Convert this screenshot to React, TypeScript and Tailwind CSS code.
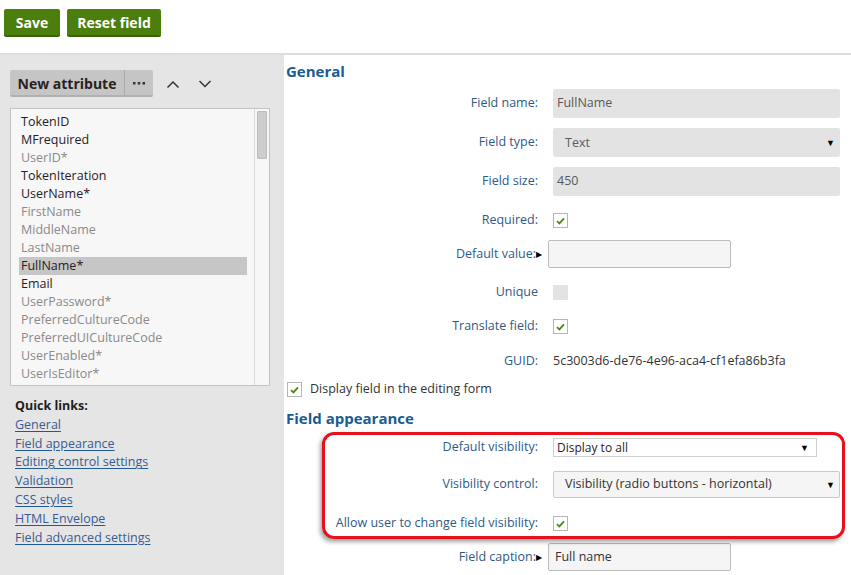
import React from "react";

const F = { fontFamily: '"Open Sans", "Noto Sans", Arial, sans-serif' };

function Check({ checked = true, disabled = false }: { checked?: boolean; disabled?: boolean }) {
  if (disabled) return <div className="w-[15px] h-[15px] bg-[#e3e3e3]" />;
  return (
    <div className="w-[15px] h-[15px] border border-[#b5b5b5] bg-white flex items-center justify-center">
      {checked && (
        <svg width="9" height="8" viewBox="0 0 9 8">
          <path d="M1 4.2 L3.4 6.4 L8 1.4" fill="none" stroke="#4a8a12" strokeWidth="1.8" />
        </svg>
      )}
    </div>
  );
}

function Label({ children, arrow = false, w = 252 }: { children: React.ReactNode; arrow?: boolean; w?: number }) {
  return (
    <div
      className="shrink-0 text-right text-[12.5px] text-[#2e5a86] flex justify-end items-center"
      style={{ width: arrow ? w + 4 : w }}
    >
      <span>{children}</span>
      {arrow && <span className="text-[8px] text-black leading-none">▶</span>}
    </div>
  );
}

const items: [string, boolean][] = [
  ["TokenID", true],
  ["MFrequired", true],
  ["UserID*", false],
  ["TokenIteration", true],
  ["UserName*", true],
  ["FirstName", false],
  ["MiddleName", false],
  ["LastName", false],
  ["FullName*", true],
  ["Email", true],
  ["UserPassword*", false],
  ["PreferredCultureCode", false],
  ["PreferredUICultureCode", false],
  ["UserEnabled*", false],
  ["UserIsEditor*", false],
];

const links = [
  "General",
  "Field appearance",
  "Editing control settings",
  "Validation",
  "CSS styles",
  "HTML Envelope",
  "Field advanced settings",
];

export default function App() {
  return (
    <div className="w-[851px] h-[575px] overflow-hidden bg-white flex flex-col" style={F}>
      {/* top bar */}
      <div className="h-[55px] shrink-0 flex items-start pt-[9px] pl-[4px] gap-[7px] border-b-2 border-[#dcdcdc]">
        <button className="w-[56px] h-[28px] bg-[#4b7e0c] border-b-2 border-[#3b6409] rounded-[2px] text-white font-bold text-[14px]">
          Save
        </button>
        <button className="w-[94px] h-[28px] bg-[#4b7e0c] border-b-2 border-[#3b6409] rounded-[2px] text-white font-bold text-[14px]">
          Reset field
        </button>
      </div>

      <div className="flex flex-1 min-h-0">
        {/* sidebar */}
        <div className="w-[284px] shrink-0 bg-[#e5e5e5] flex flex-col pl-[10px] pt-[15px]">
          <div className="flex items-center h-[27px]">
            <div className="flex h-[27px] rounded-[2px] bg-[#c5c5c5] border-b-2 border-[#b0b0b0]">
              <div className="w-[114px] flex items-center justify-center font-bold text-[14px] text-[#2b2020] pt-[1px]">
                New attribute
              </div>
              <div className="w-[1px] bg-[#a9a9a9]" />
              <div className="w-[28px] flex items-center justify-center pt-[2px]">
                <svg width="12" height="3" viewBox="0 0 12 3">
                  <rect x="0" y="0" width="2.5" height="2.5" fill="#333" />
                  <rect x="4.75" y="0" width="2.5" height="2.5" fill="#333" />
                  <rect x="9.5" y="0" width="2.5" height="2.5" fill="#333" />
                </svg>
              </div>
            </div>
            <svg width="14" height="10" viewBox="0 0 14 10" className="ml-[13px]">
              <path d="M1.5 8.5 L7 3 L12.5 8.5" fill="none" stroke="#333" strokeWidth="1.5" />
            </svg>
            <svg width="14" height="10" viewBox="0 0 14 10" className="ml-[18px]">
              <path d="M1.5 2 L7 7.5 L12.5 2" fill="none" stroke="#333" strokeWidth="1.5" />
            </svg>
          </div>

          <div className="mt-[11px] w-[260px] h-[278px] border border-[#c3c3c3] bg-[#f7f7f7] flex">
            <div className="flex-1 pt-[4px] pl-[8px] pr-[7px]">
              {items.map(([t, dark]) => (
                <div
                  key={t}
                  className={`h-[18px] leading-[18px] text-[12.5px] pl-[2px] ${t === "FullName*" ? "bg-[#c6c6c6]" : ""} ${dark ? "text-[#2a1b1e]" : "text-[#8a8a8a]"}`}
                >
                  {t}
                </div>
              ))}
            </div>
            <div className="w-[15px] border-l border-[#dadada] pt-[2px] flex justify-center">
              <div className="w-[10px] h-[48px] bg-[#cdcdcd] border border-[#bdbdbd] rounded-[1px]" />
            </div>
          </div>

          <div className="mt-[11px] pl-[5px] text-[12.5px] leading-[18.8px]">
            <div className="font-bold text-[#1e1e1e]">Quick links:</div>
            {links.map((l) => (
              <div key={l}>
                <span className="text-[#3a5b92] underline decoration-[#1f5a96] underline-offset-[2px]">{l}</span>
              </div>
            ))}
          </div>
        </div>

        {/* main */}
        <div className="flex-1 flex flex-col pl-[2px] relative">
          <div className="h-[34px] flex items-center text-[15px] font-bold text-[#1a5b93] pb-[2px]">General</div>

          <div className="flex items-center h-[29px]">
            <Label>Field name:</Label>
            <div className="ml-[15px] w-[287px] h-[29px] bg-[#e3e3e3] rounded-[2px] flex items-center pl-[4px] text-[12.5px] text-[#5a5a5a]">
              FullName
            </div>
          </div>
          <div className="flex items-center h-[29px] mt-[10px]">
            <Label>Field type:</Label>
            <div className="ml-[15px] w-[287px] h-[29px] bg-[#e3e3e3] rounded-[2px] flex items-center pl-[12px] pr-[5px] text-[12.5px] text-[#5a5a5a]">
              <span className="flex-1 pt-[2px]">Text</span>
              <span className="text-[9px] text-black">▼</span>
            </div>
          </div>
          <div className="flex items-center h-[29px] mt-[10px]">
            <Label>Field size:</Label>
            <div className="ml-[15px] w-[287px] h-[29px] bg-[#e3e3e3] rounded-[2px] flex items-center pl-[4px] text-[12.5px] text-[#5a5a5a]">
              450
            </div>
          </div>
          <div className="flex items-center h-[29px] mt-[10px]">
            <Label>Required:</Label>
            <div className="ml-[15px]">
              <Check />
            </div>
          </div>
          <div className="flex items-center h-[28px] mt-[5px]">
            <Label arrow>Default value:</Label>
            <div className="ml-[6px] w-[183px] h-[28px] bg-[#f5f5f5] border border-[#bcbcbc] rounded-[2px]" />
          </div>
          <div className="flex items-center h-[29px] mt-[10px]">
            <Label>Unique</Label>
            <div className="ml-[15px]">
              <Check disabled />
            </div>
          </div>
          <div className="flex items-center h-[29px] mt-[5px]">
            <Label>Translate field:</Label>
            <div className="ml-[15px]">
              <Check />
            </div>
          </div>
          <div className="flex items-center h-[29px] mt-[6px]">
            <Label>GUID:</Label>
            <div className="ml-[15px] text-[12.5px] text-[#333]">5c3003d6-de76-4e96-aca4-cf1efa86b3fa</div>
          </div>
          <div className="flex items-center h-[27px] pl-[1px]">
            <Check />
            <span className="ml-[8px] text-[12.5px] text-[#333]">Display field in the editing form</span>
          </div>
          <div className="h-[30px] flex items-center text-[15px] font-bold text-[#1a5b93] pt-[1px]">Field appearance</div>

          <div className="relative flex flex-col pt-[5px]">
            <div className="flex items-center h-[19px]">
              <Label>Default visibility:</Label>
              <div className="ml-[15px] w-[264px] h-[19px] bg-white border border-[#cfcfcf] flex items-center pl-[3px] pr-[7px] text-[12px] text-[#2a1b1e]">
                <span className="flex-1">Display to all</span>
                <span className="text-[9px] text-black">▼</span>
              </div>
            </div>
            <div className="flex items-center h-[27px] mt-[14px]">
              <Label>Visibility control:</Label>
              <div className="ml-[15px] w-[287px] h-[27px] bg-[#f5f5f5] border border-[#c9c9c9] rounded-[2px] flex items-center pl-[11px] pr-[4px] text-[12.5px] text-[#333]">
                <span className="flex-1">Visibility (radio buttons - horizontal)</span>
                <span className="text-[9px] text-black">▼</span>
              </div>
            </div>
            <div className="flex items-center h-[29px] mt-[11px]">
              <Label>Allow user to change field visibility:</Label>
              <div className="ml-[15px]">
                <Check />
              </div>
            </div>
            <div className="absolute left-[36px] top-[-1px] w-[523px] h-[107px] border-[3px] border-[#e8101a] rounded-[12px] shadow-[-2px_3px_4px_rgba(0,0,0,0.35)] pointer-events-none" />
          </div>

          <div className="flex items-center h-[28px] mt-[5px]">
            <Label arrow>Field caption:</Label>
            <div className="ml-[6px] w-[183px] h-[28px] bg-[#f5f5f5] border border-[#bcbcbc] rounded-[2px] flex items-center pl-[6px] text-[12.5px] text-[#333]">
              Full name
            </div>
          </div>
        </div>
      </div>
    </div>
  );
}
